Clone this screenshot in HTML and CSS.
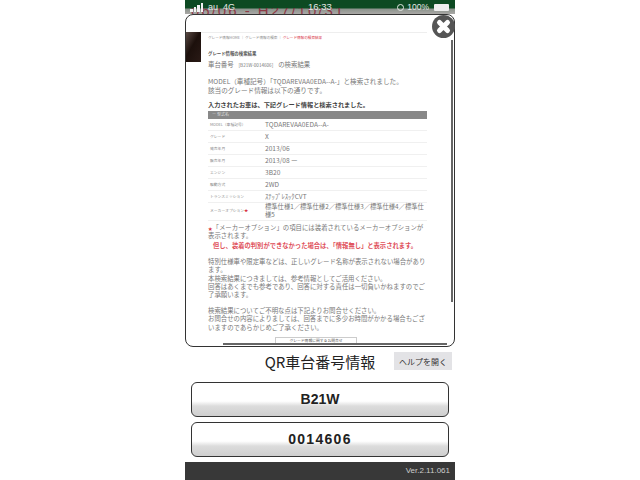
FILE: index.html
```html
<!DOCTYPE html>
<html lang="ja">
<head>
  <meta charset="UTF-8" />
  <title>QR車台番号情報</title>
  <link rel="stylesheet" href="styles.css">
</head>
<body>
  <div class="phone">
    <div class="status-bar">
      <div class="behind-title">06/06 - H27/10/31</div>
      <div class="status-left">
        <span class="signal"><i></i><i></i><i></i><i></i></span>
        <span>au</span>
        <span>4G</span>
      </div>
      <div class="status-time">16:33</div>
      <div class="status-right">
        <span class="lock"></span>
        <span>100%</span>
        <span class="battery"></span>
      </div>
    </div>

    <div class="modal">
      <div class="modal-head"></div>
      <div class="modal-scroll">
        <div class="thumb"></div>
        <div class="doc">
          <div class="crumbs">グレード情報HOME ｜ グレード情報の検索 ｜ <span class="red">グレード情報の検索結果</span></div>
          <div class="doc-title">グレード情報の検索結果</div>
          <div class="doc-search">車台番号<small>[B21W-0014606]</small>の検索結果</div>
          <p class="doc-text">MODEL（車種記号）「TQDAREVAA0EDA--A-」と検索されました。<br>該当のグレード情報は以下の通りです。</p>
          <div class="doc-strong">入力されたお車は、下記グレード情報と検索されました。</div>
          <div class="table-head">ー 型式名</div>
          <div class="spec-row"><span class="spec-key">MODEL（車種記号）</span><span>TQDAREVAA0EDA--A-</span></div>
          <div class="spec-row"><span class="spec-key">グレード</span><span>X</span></div>
          <div class="spec-row"><span class="spec-key">発売年月</span><span>2013/06</span></div>
          <div class="spec-row"><span class="spec-key">販売年月</span><span>2013/08 ー</span></div>
          <div class="spec-row"><span class="spec-key">エンジン</span><span>3B20</span></div>
          <div class="spec-row"><span class="spec-key">駆動方式</span><span>2WD</span></div>
          <div class="spec-row"><span class="spec-key">トランスミッション</span><span>ｽﾃｯﾌﾟﾚｽｯｸCVT</span></div>
          <div class="spec-row spec-row-tall"><span class="spec-key">メーカーオプション<b class="red">★</b></span><span>標準仕様1／標準仕様2／標準仕様3／標準仕様4／標準仕様5</span></div>
          <p class="doc-text note"><b class="red star">★</b>「メーカーオプション」の項目には装着されているメーカーオプションが表示されます。</p>
          <p class="warn">但し、装着の判別ができなかった場合は、「情報無し」と表示されます。</p>
          <p class="doc-text para">特別仕様車や限定車などは、正しいグレード名称が表示されない場合があります。<br>本検索結果につきましては、参考情報としてご活用ください。<br>回答はあくまでも参考であり、回答に対する責任は一切負いかねますのでご了承願います。</p>
          <p class="doc-text para para-last">検索結果についてご不明な点は下記よりお問合せください。<br>お問合せの内容によりましては、回答までに多少お時間がかかる場合もございますのであらかじめご了承ください。</p>
          <div class="doc-link">グレード情報に関するお問合せ</div>
        </div>
        <div class="scrollbar"></div>
        <div class="scrollbar-h"></div>
      </div>
      <button class="close" aria-label="閉じる">
        <svg viewBox="0 0 23 23" width="23" height="23"><path d="M7.5 7.5 L15.5 15.5 M15.5 7.5 L7.5 15.5" stroke="#fff" stroke-width="5" stroke-linecap="round" fill="none"/></svg>
      </button>
    </div>

    <div class="title-row">
      <div class="title">QR車台番号情報</div>
      <button class="help">ヘルプを開く</button>
    </div>
    <div class="code-box">B21W</div>
    <div class="code-box code-digits">0014606</div>
    <div class="footer">Ver.2.11.061</div>
  </div>
</body>
</html>
```

FILE: styles.css
```css
* {
  box-sizing: border-box;
}

body {
  margin: 0;
  background: #fff;
  font-family: "Noto Sans CJK JP", "Liberation Sans", sans-serif;
  color: #222;
}

.phone {
  position: relative;
  width: 270px;
  height: 480px;
  margin-left: 185px;
  background: #fff;
  overflow: hidden;
  display: flex;
  flex-direction: column;
}

.status-bar {
  height: 14px;
  flex: none;
  background: linear-gradient(to bottom, #0d4a22 0, #0d4a22 8px, #8b938c 9px, #aaa8a6 14px);
  color: #e4e8e4;
  font-family: "Liberation Sans", "Noto Sans CJK JP", sans-serif;
  font-size: 9px;
  line-height: 14px;
  display: flex;
  justify-content: space-between;
  padding: 0 6px 0 5px;
  position: relative;
  overflow: hidden;
}

.status-left {
  position: relative;
  display: flex;
  gap: 5px;
  align-items: center;
}

.signal {
  display: flex;
  align-items: flex-end;
  gap: 1px;
  height: 9px;
}

.signal i {
  display: block;
  width: 2.5px;
  background: #f2f2f2;
}

.signal i:nth-child(1) { height: 3px; }
.signal i:nth-child(2) { height: 5px; }
.signal i:nth-child(3) { height: 7px; }
.signal i:nth-child(4) { height: 9px; }

.status-time {
  position: absolute;
  left: 123px;
  top: 0;
  font-size: 9.5px;
}

.status-right {
  position: relative;
  display: flex;
  gap: 3px;
  align-items: center;
  font-size: 8.5px;
}

.lock {
  width: 7px;
  height: 7px;
  border: 1px solid #e4e8e4;
  border-radius: 50%;
}

.battery {
  width: 15px;
  height: 7px;
  margin-left: 2px;
  background: #eee;
  border-radius: 1px;
}

/* page title left showing behind the modal, only its lower half is visible */
.behind-title {
  position: absolute;
  left: 6px;
  top: 8px;
  height: 6px;
  overflow: hidden;
  color: #8c2232;
  font-size: 15px;
  letter-spacing: 2px;
  line-height: 6px;
  white-space: nowrap;
  opacity: 0.8;
}

.modal {
  position: absolute;
  left: 0;
  top: 14px;
  width: 270px;
  height: 333px;
  background: #fff;
  border: 1px solid #333;
  border-radius: 8px;
}

.modal-head {
  height: 17px;
}

.modal-scroll {
  position: relative;
  height: 314px;
  overflow: hidden;
  border-radius: 0 0 7px 7px;
  display: flex;
}

.thumb {
  width: 15px;
  height: 30px;
  flex: none;
  background: linear-gradient(120deg, #5a4a44, #1c100c 45%, #2a1a16);
}

.doc {
  width: 226px;
  flex: none;
  padding: 1px 0 0 7px;
  color: #777;
  border-top: 1px solid #eee;
}

.crumbs {
  font-size: 3.6px;
  line-height: 7px;
  color: #888;
  white-space: nowrap;
}

.red {
  color: #d8333f;
}

.star {
  font-size: 4.5px;
}

.doc-title {
  margin-top: 9px;
  font-size: 4.4px;
  line-height: 7px;
  color: #555;
  font-weight: 700;
}

.doc-search {
  margin-top: 2px;
  font-size: 6.4px;
  line-height: 12px;
  color: #777;
}

.doc-search small {
  font-size: 4.6px;
  margin: 0 5px;
}

.doc-text {
  margin: 5.5px 0 0;
  font-size: 6.6px;
  line-height: 9px;
  color: #777;
}

.doc-strong {
  margin-top: 5.5px;
  font-size: 6.2px;
  line-height: 10px;
  font-weight: 700;
  color: #444;
  white-space: nowrap;
}

.table-head {
  background: #888;
  color: #ddd;
  font-size: 4px;
  line-height: 7.5px;
  height: 7.5px;
  padding-left: 4px;
  margin-top: 1px;
}

.spec-row {
  display: flex;
  align-items: center;
  height: 12px;
  font-size: 6.6px;
  line-height: 9px;
  color: #777;
  border-bottom: 1px solid #f0f0f0;
}

.spec-row-tall {
  height: 18px;
  font-size: 6.3px;
  line-height: 8.5px;
}

.spec-key {
  flex: none;
  width: 57px;
  padding-left: 2px;
  font-size: 3.8px;
  color: #888;
}

.note {
  margin-top: 3px;
  font-size: 6.4px;
  line-height: 8.6px;
}

.warn {
  margin: 0;
  padding-left: 5px;
  font-size: 6.3px;
  line-height: 9px;
  font-weight: 700;
  color: #e0505a;
  white-space: nowrap;
}

.para {
  margin-top: 8.3px;
  font-size: 6.4px;
  line-height: 8.3px;
}

.para-last {
  margin-top: 7.5px;
}

.doc-link {
  width: 82px;
  margin: 5px 0 0 67px;
  border: 1px solid #ccc;
  font-size: 3.8px;
  line-height: 5px;
  text-align: center;
  color: #555;
}

.scrollbar {
  position: absolute;
  right: 1px;
  top: 8px;
  height: 262px;
  width: 2px;
  background: #666;
}

.scrollbar-h {
  position: absolute;
  left: 37px;
  bottom: 1px;
  width: 224px;
  height: 2px;
  background: #666;
}

.close {
  position: absolute;
  right: -1px;
  top: 0;
  width: 23px;
  height: 23px;
  padding: 0;
  border: none;
  border-radius: 50%;
  background: #555;
}

.close svg {
  display: block;
}

.title-row {
  margin-top: 333px;
  height: 35px;
  flex: none;
  position: relative;
  text-align: center;
}

.title {
  font-size: 15px;
  line-height: 30px;
  color: #222;
}

.help {
  position: absolute;
  right: 3px;
  top: 5px;
  width: 58px;
  height: 18px;
  padding: 0;
  border: none;
  background: #e3e3e6;
  color: #333;
  font-family: inherit;
  font-size: 8px;
}

.code-box {
  width: 258px;
  height: 35px;
  margin: 0 auto 5px;
  flex: none;
  border: 1px solid #333;
  border-radius: 6px;
  background: linear-gradient(to bottom, #fff 0, #fff 55%, #dcdcdc 70%, #cfcfcf 100%);
  font-family: "Liberation Sans", sans-serif;
  font-weight: 700;
  font-size: 14px;
  line-height: 33px;
  text-align: center;
  color: #222;
}

.code-digits {
  letter-spacing: 1.3px;
}

.footer {
  position: absolute;
  left: 0;
  right: 0;
  bottom: 0;
  height: 18px;
  background: #383838;
  color: #ccc;
  font-family: "Liberation Sans", sans-serif;
  font-size: 8px;
  line-height: 18px;
  text-align: right;
  padding-right: 5px;
}
```
